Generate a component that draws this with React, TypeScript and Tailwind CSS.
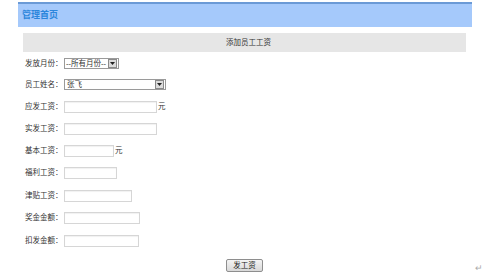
const cjk = { fontFamily: '"Liberation Sans", "Noto Sans CJK SC", sans-serif' };

function Arrow() {
  return (
    <div className="w-[9px] h-[9px] shrink-0 border border-[#8a8a8a] bg-[#dcdcdc] flex items-center justify-center">
      <svg width="5" height="3" viewBox="0 0 5 3">
        <path d="M0 0h5L2.5 3z" fill="#222" />
      </svg>
    </div>
  );
}

function Label({ text }: { text: string }) {
  return <span className="w-[39px] shrink-0 whitespace-nowrap text-[7.5px] text-[#333]">{text}</span>;
}

function Field({ label, width, unit, h = 'h-[22px]' }: { label: string; width: number; unit?: boolean; h?: string }) {
  return (
    <div className={`flex items-center ${h}`}>
      <Label text={label} />
      <div
        className="h-[12px] shrink-0 border border-[#d6d6d6] bg-white shadow-[inset_0_1px_1px_rgba(0,0,0,0.06)]"
        style={{ width }}
      />
      {unit && <span className="ml-[1px] text-[7.5px] text-[#333]">元</span>}
    </div>
  );
}

export default function App() {
  return (
    <div className="w-[499px] h-[275px] bg-white overflow-hidden" style={cjk}>
      <div className="mt-[2px] ml-[18px] w-[454px] h-[25px] border-t-2 border-[#6b9ad6] bg-[#a5c9fb] flex items-center pl-[4px]">
        <span className="text-[9px] font-bold text-[#2c86dc]">管理首页</span>
      </div>
      <div className="mt-[6px] ml-[23px] w-[443px] h-[19px] bg-[#e6e6e6] flex items-center justify-center">
        <span className="text-[7.5px] text-[#333] pl-[8px]">添加员工工资</span>
      </div>

      <div className="ml-[25px] mt-[1px]">
        <div className="flex items-center h-[21px]">
          <Label text="发放月份：" />
          <div className="flex items-center h-[11px] border border-[#9a9a9a] bg-white pl-[1px] pr-[1px] gap-[2px]">
            <span className="text-[7.5px] text-[#333] leading-none whitespace-nowrap">--所有月份--</span>
            <Arrow />
          </div>
        </div>
        <div className="flex items-center h-[21px]">
          <Label text="员工姓名：" />
          <div className="flex items-center justify-between w-[102px] h-[11px] border border-[#9a9a9a] bg-white pl-[2px] pr-[1px]">
            <span className="text-[7.5px] text-[#333] leading-none">张飞</span>
            <Arrow />
          </div>
        </div>
        <Field label="应发工资：" width={93} unit h="h-[23px]" />
        <Field label="实发工资：" width={93} />
        <Field label="基本工资：" width={50} unit />
        <Field label="福利工资：" width={53} />
        <Field label="津贴工资：" width={68} h="h-[23px]" />
        <Field label="奖金金额：" width={76} />
        <Field label="扣发金额：" width={75} h="h-[23px]" />
      </div>

      <div className="flex items-center mt-[6px]">
        <div className="ml-[226px] w-[37px] h-[13px] border border-[#8e8e8e] rounded-[2px] bg-gradient-to-b from-[#f4f4f4] to-[#d8d8d8] flex items-center justify-center">
          <span className="text-[7.5px] text-[#222] leading-none">发工资</span>
        </div>
        <span className="ml-[212px] mt-[6px] text-[9px] text-[#aaa] leading-none">↵</span>
      </div>
    </div>
  );
}
